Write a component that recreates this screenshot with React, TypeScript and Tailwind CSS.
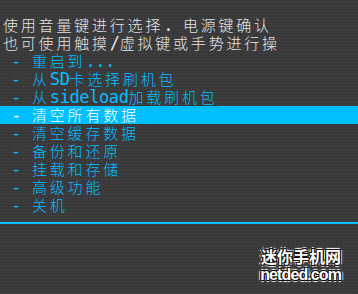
import React from 'react';

type Seg = { t: string; latin?: boolean };

const header: Seg[][] = [
  [{ t: '使用音量键进行选择' }, { t: '. ', latin: true }, { t: '电源键确认' }],
  [{ t: '也可使用触摸' }, { t: '/', latin: true }, { t: '虚拟键或手势进行操' }],
];

const menu: Seg[][] = [
  [{ t: '重启到' }, { t: '...', latin: true }],
  [{ t: '从' }, { t: 'SD', latin: true }, { t: '卡选择刷机包' }],
  [{ t: '从' }, { t: 'sideload', latin: true }, { t: '加载刷机包' }],
  [{ t: '清空所有数据' }],
  [{ t: '清空缓存数据' }],
  [{ t: '备份和还原' }],
  [{ t: '挂载和存储' }],
  [{ t: '高级功能' }],
  [{ t: '关机' }],
];

const selected = 3; // 当前选中的菜单项

const Text = ({ segs }: { segs: Seg[] }) => (
  <>
    {segs.map((s, i) =>
      s.latin ? (
        <span key={i} className="font-['DejaVu_Sans_Mono',monospace] text-[17px] leading-[18px] tracking-[-0.4px] whitespace-pre">
          {s.t}
        </span>
      ) : (
        <span key={i} className="text-[15px] leading-[18px] font-light tracking-[2.8px]">
          {s.t}
        </span>
      )
    )}
  </>
);

const App: React.FC = () => {
  return (
    <div className="w-[358px] h-[294px] overflow-hidden bg-[#3a3a3c] bg-[image:repeating-linear-gradient(0deg,rgba(255,255,255,0.025)_0px,rgba(255,255,255,0.025)_1px,transparent_1px,transparent_3px),repeating-linear-gradient(90deg,rgba(0,0,0,0.06)_0px,rgba(0,0,0,0.06)_1px,transparent_1px,transparent_4px)] font-['Noto_Sans_CJK_SC',sans-serif] flex flex-col">
      <div className="pt-[16px]">
        {header.map((segs, i) => (
          <div key={i} className="h-[18px] leading-[18px] flex items-center pl-[3px] text-[#e4e4e4] whitespace-nowrap">
            <Text segs={segs} />
          </div>
        ))}
        {menu.map((segs, i) => (
          <div
            key={i}
            className={`h-[18px] leading-[18px] flex items-center whitespace-nowrap ${
              i === selected ? 'bg-[#00bfff] text-white' : 'text-[#00bfff]'
            }`}
          >
            <span className="w-[32px] pl-[11px] font-['DejaVu_Sans_Mono',monospace] text-[17px] leading-[18px]">-</span>
            <Text segs={segs} />
          </div>
        ))}
      </div>

      <div className="mt-[8px] h-[2px] bg-[#00bfff]" />

      {/* 水印 */}
      <div className="flex flex-col items-end pr-[17px] mt-[24px] gap-[3px] text-white font-bold leading-none [text-shadow:1px_0_0_#111,-1px_0_0_#111,0_1px_0_#111,0_-1px_0_#111,1px_1px_0_#111,-1px_-1px_0_#111,1px_-1px_0_#111,-1px_1px_0_#111,2px_0_1px_#fff,-2px_0_1px_#fff,0_2px_1px_#fff,0_-2px_1px_#fff]">
        <span className="text-[16px]">迷你手机网</span>
        <span className="font-['Liberation_Sans',sans-serif] text-[16px] tracking-[-0.9px]">netded.com</span>
      </div>
    </div>
  );
};

export default App;
